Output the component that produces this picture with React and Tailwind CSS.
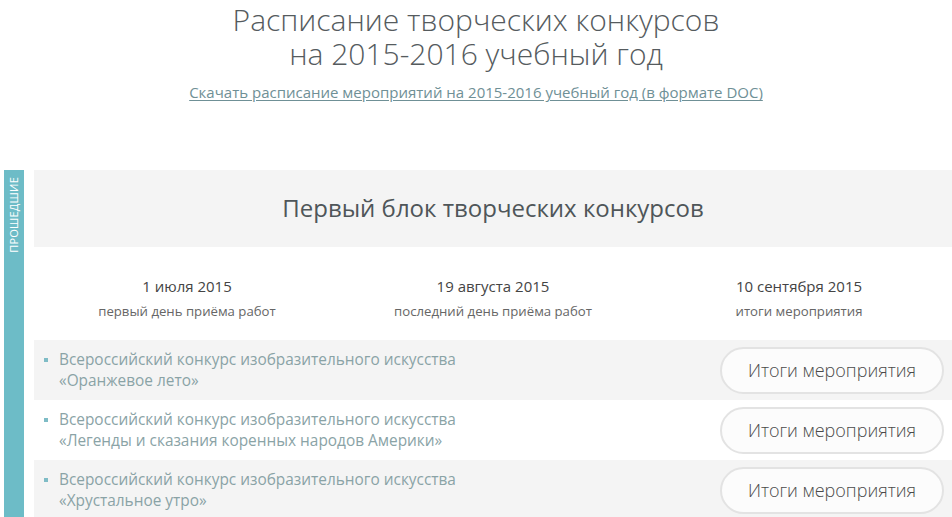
import React from 'react';

const konkursy = [
  { id: 1, name: '«Оранжевое лето»' },
  { id: 2, name: '«Легенды и сказания коренных народов Америки»' },
  { id: 3, name: '«Хрустальное утро»' },
];

const daty = [
  { date: '1 июля 2015', label: 'первый день приёма работ' },
  { date: '19 августа 2015', label: 'последний день приёма работ' },
  { date: '10 сентября 2015', label: 'итоги мероприятия' },
];

export default function App() {
  return (
    <div className="w-[952px] h-[517px] overflow-hidden bg-white font-['Open_Sans',sans-serif]">
      {/* Заголовок */}
      <div className="pt-[3px] text-center">
        <h1 className="text-[30px] leading-[34px] font-light text-[#555b5e]">
          Расписание творческих конкурсов
          <br />
          на 2015-2016 учебный год
        </h1>
        <a href="#" className="inline-block mt-[11px] text-[15px] leading-[20px] text-[#6f9096] underline underline-offset-2">
          Скачать расписание мероприятий на 2015-2016 учебный год (в формате DOC)
        </a>
      </div>

      <div className="flex mt-[66px]">
        {/* Боковая метка */}
        <div className="ml-[4px] w-[20px] h-[400px] bg-[#6dbcc7] flex justify-center pt-[7px]">
          <span className="[writing-mode:vertical-rl] rotate-180 text-[11px] leading-[20px] text-white tracking-[0.2px] h-fit">
            ПРОШЕДШИЕ
          </span>
        </div>

        <div className="ml-[10px] w-[918px] flex-none">
          <div className="h-[77px] bg-[#f4f4f4] flex items-center justify-center">
            <h2 className="text-[24px] text-[#4f5659] pb-[1px]">Первый блок творческих конкурсов</h2>
          </div>

          <div className="grid grid-cols-3 h-[93px] pt-[29px] text-center">
            {daty.map(d => (
              <div key={d.date}>
                <p className="text-[15px] leading-[20px] font-medium text-[#444]">{d.date}</p>
                <p className="mt-[6px] text-[13.2px] leading-[18px] text-[#666]">{d.label}</p>
              </div>
            ))}
          </div>

          {konkursy.map((k, i) => (
            <div
              key={k.id}
              className={`h-[60px] flex items-center justify-between pr-[8px] ${i % 2 === 0 ? 'bg-[#f4f4f4]' : 'bg-white'}`}
            >
              <div className="flex pl-[10px] text-[15.4px] leading-[21px] text-[#8aa3a6]">
                <span className="mt-[9px] w-[4px] h-[4px] bg-[#7fbcc6] flex-none" />
                <p className="ml-[11px]">
                  Всероссийский конкурс изобразительного искусства
                  <br />
                  {k.name}
                </p>
              </div>
              <button className="w-[224px] h-[47px] rounded-full border-2 border-[#e3e3e3] bg-[#fcfcfc] text-[18px] font-light text-[#4a4a4a]">
                Итоги мероприятия
              </button>
            </div>
          ))}
        </div>
      </div>
    </div>
  );
}
